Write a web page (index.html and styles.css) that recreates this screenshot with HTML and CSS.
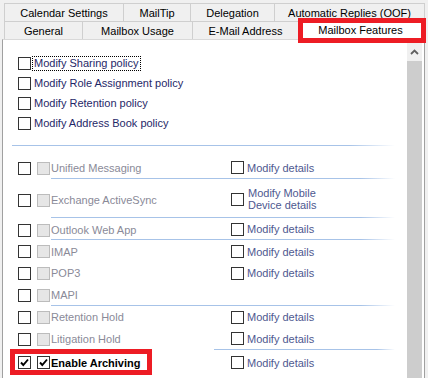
FILE: index.html
```html
<!DOCTYPE html>
<html>
<head>
<meta charset="utf-8">
<link rel="stylesheet" href="styles.css">
</head>
<body>
<div class="tabs">
  <div class="tabrow">
    <div class="tab w1">Calendar Settings</div>
    <div class="tab w2">MailTip</div>
    <div class="tab w3">Delegation</div>
    <div class="tab w4 last">Automatic Replies (OOF)</div>
  </div>
  <div class="tabrow">
    <div class="tab w5">General</div>
    <div class="tab w6">Mailbox Usage</div>
    <div class="tab w7">E-Mail Address</div>
    <div class="tab sel">Mailbox Features</div>
  </div>
</div>
<div class="panel">
  <div class="content">
    <div class="prow"><span class="cb"></span><span class="plbl focus">Modify Sharing policy</span></div>
    <div class="prow"><span class="cb"></span><span class="plbl">Modify Role Assignment policy</span></div>
    <div class="prow"><span class="cb"></span><span class="plbl">Modify Retention policy</span></div>
    <div class="prow"><span class="cb"></span><span class="plbl">Modify Address Book policy</span></div>
    <div class="sep"></div>

    <div class="frow r-um">
      <span class="cb"></span><span class="cb dis"></span>
      <div class="main line"><span class="flbl">Unified Messaging</span><div class="right"><span class="cb"></span><span class="rlbl">Modify details</span></div></div>
    </div>
    <div class="frow r-eas">
      <span class="cb"></span><span class="cb dis"></span>
      <div class="main line"><span class="flbl">Exchange ActiveSync</span><div class="right"><span class="cb"></span><span class="rlbl two">Modify Mobile<br>Device details</span></div></div>
    </div>
    <div class="frow r-owa">
      <span class="cb"></span><span class="cb dis"></span>
      <div class="main line"><span class="flbl">Outlook Web App</span><div class="right"><span class="cb"></span><span class="rlbl">Modify details</span></div></div>
    </div>
    <div class="frow r-imap">
      <span class="cb"></span><span class="cb dis"></span>
      <div class="main"><span class="flbl">IMAP</span><div class="right"><span class="cb"></span><span class="rlbl">Modify details</span></div></div>
    </div>
    <div class="frow r-pop">
      <span class="cb"></span><span class="cb dis"></span>
      <div class="main"><span class="flbl">POP3</span><div class="right"><span class="cb"></span><span class="rlbl">Modify details</span></div></div>
    </div>
    <div class="frow r-mapi">
      <span class="cb"></span><span class="cb dis"></span>
      <div class="main line"><span class="flbl">MAPI</span><div class="right"></div></div>
    </div>
    <div class="frow r-ret">
      <span class="cb"></span><span class="cb dis"></span>
      <div class="main"><span class="flbl">Retention Hold</span><div class="right"><span class="cb"></span><span class="rlbl">Modify details</span></div></div>
    </div>
    <div class="frow r-lit">
      <span class="cb"></span><span class="cb dis"></span>
      <div class="main"><span class="flbl">Litigation Hold</span><div class="right line"><span class="cb"></span><span class="rlbl">Modify details</span></div></div>
    </div>
    <div class="frow r-arc">
      <span class="cb"><svg width="11" height="11" viewBox="0 0 11 11"><polyline points="2,5.5 4.3,8 9,2.5" fill="none" stroke="#000" stroke-width="1.9"/></svg></span>
      <span class="cb"><svg width="11" height="11" viewBox="0 0 11 11"><polyline points="2,5.5 4.3,8 9,2.5" fill="none" stroke="#000" stroke-width="1.9"/></svg></span>
      <div class="main"><span class="flbl bold">Enable Archiving</span><div class="right"><span class="cb"></span><span class="rlbl">Modify details</span></div></div>
    </div>
  </div>
  <div class="sb">
    <div class="sb-up"><svg width="9" height="6" viewBox="0 0 9 6"><polyline points="1,5 4.5,1.5 8,5" fill="none" stroke="#606060" stroke-width="1.8"/></svg></div>
    <div class="sb-thumb"></div>
  </div>
</div>
</body>
</html>
```
FILE: styles.css
```css
html, body {
  margin: 0;
  padding: 0;
}
body {
  width: 428px;
  height: 378px;
  overflow: hidden;
  background: #f0f0f0;
  font-family: "Liberation Sans", Arial, sans-serif;
  font-size: 11px;
  color: #000;
}
.tabs {
  padding: 3px 0 0 4px;
  position: relative;
  z-index: 2;
}
.tabrow {
  display: flex;
  height: 18px;
}
.tab {
  box-sizing: border-box;
  height: 18px;
  border-left: 1px solid #cfcfcf;
  border-top: 1px solid #cfcfcf;
  background: #f0f0f0;
  display: flex;
  align-items: center;
  justify-content: center;
  white-space: nowrap;
}
.last { border-right: 1px solid #cfcfcf; }
.w1 { width: 119px; }
.w2 { width: 67px; }
.w3 { width: 84px; }
.w4 { width: 151px; }
.w5 { width: 78px; }
.w6 { width: 110px; }
.w7 { width: 106px; }
.sel {
  width: 125px;
  height: 22px;
  margin-top: -3px;
  background: #fff;
  border-right: 1px solid #cfcfcf;
  position: relative;
}
.sel::after {
  content: "";
  position: absolute;
  left: -1px;
  top: -1px;
  right: -4px;
  bottom: -3px;
  border: 5px solid #ed1c24;
}
.panel {
  box-sizing: border-box;
  width: 423px;
  height: 339px;
  margin-left: 2px;
  background: #fff;
  border-top: 1px solid #d9d9d9;
  border-left: 1px solid #a0a0a0;
  border-right: 1px solid #a0a0a0;
  padding-right: 2px;
  display: flex;
  overflow: hidden;
}
.content {
  width: 404px;
  flex: none;
  padding-top: 13px;
}
.sb {
  width: 15px;
  flex: none;
  margin-top: 3px;
  display: flex;
  flex-direction: column;
}
.sb-up {
  height: 18px;
  background: #f0f0f0;
  display: flex;
  align-items: center;
  justify-content: center;
}
.sb-thumb {
  flex: 1;
  background: #cdcdcd;
}
.cb {
  box-sizing: border-box;
  width: 13px;
  height: 13px;
  flex: none;
  border: 1px solid #333;
  background: #fff;
  display: flex;
  align-items: center;
  justify-content: center;
}
.cb.dis {
  border-color: #bcbcbc;
  background: #e6e6e6;
}
.prow {
  height: 20px;
  display: flex;
  align-items: center;
  padding-left: 15px;
}
.plbl {
  margin-left: 3px;
  color: #1f2868;
  line-height: 13px;
  white-space: nowrap;
}
.plbl.focus {
  margin-left: 2px;
  outline: 1px dotted #000;
  outline-offset: 0;
  padding: 0 1px 0 0;
  border-left: 1px solid transparent;
}
.sep {
  height: 1px;
  margin: 12px 12px 0 9px;
  background: linear-gradient(to right, #a7c3e8 88%, rgba(167,195,232,0));
}
.sep + .frow { margin-top: 12px; }
.frow {
  box-sizing: border-box;
  display: flex;
  align-items: center;
  padding-left: 15px;
}
.frow .cb + .cb { margin-left: 6px; }
.main {
  align-self: stretch;
  flex: 1;
  margin-left: 1px;
  margin-right: 12px;
  display: flex;
  align-items: center;
  box-sizing: border-box;
}
.right {
  align-self: stretch;
  flex: 1;
  display: flex;
  align-items: center;
  padding-left: 17px;
  box-sizing: border-box;
}
.line {
  background: linear-gradient(to right, #a7c3e8 90%, rgba(167,195,232,0)) left bottom / 100% 1px no-repeat;
}
.flbl {
  width: 163px;
  flex: none;
  color: #8a8a98;
  white-space: nowrap;
}
.flbl.bold {
  font-weight: bold;
  color: #000;
}
.rlbl {
  margin-left: 3px;
  color: #4e5890;
  white-space: nowrap;
}
.rlbl.two {
  line-height: 12px;
  margin-left: 4px;
}
.r-um { height: 21px; }
.r-um .main, .r-um .right { padding-bottom: 1px; }
.r-eas { height: 39px; padding-top: 3px; }
.r-eas .main, .r-eas .right { padding-bottom: 1px; }
.r-owa { height: 22px; padding-top: 2px; }
.r-owa .main, .r-owa .right { padding-bottom: 1px; }
.r-imap { height: 22px; padding-top: 1px; }
.r-pop { height: 22px; }
.r-mapi { height: 22px; padding-top: 1px; }
.r-mapi .main { padding-bottom: 1px; }
.r-ret { height: 22px; }
.r-lit { height: 22px; }
.r-lit .right { padding-bottom: 1px; }
.r-arc {
  height: 25px;
  position: relative;
}
.r-arc::after {
  content: "";
  position: absolute;
  left: 7px;
  top: -1px;
  width: 142px;
  height: 26px;
  box-sizing: border-box;
  border: 5px solid #ed1c24;
}
```
